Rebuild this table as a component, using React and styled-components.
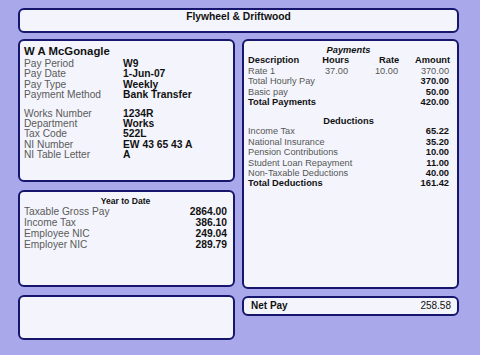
import React from 'react'
import styled, { createGlobalStyle } from 'styled-components'

const GlobalStyle = createGlobalStyle`
  html, body {
    margin: 0;
    padding: 0;
    background: #a8a8ea;
  }
  body {
    font-family: "Liberation Sans", Arial, sans-serif;
    color: #111111;
  }
  * {
    box-sizing: border-box;
  }
`

const Page = styled.div`
  width: 480px;
  height: 355px;
  padding: 8px 21px 0 18px;
  background: #a8a8ea;
  display: flex;
  flex-direction: column;
  gap: 6px;
`

const Panel = styled.div`
  background: #f4f5fc;
  border: 2px solid #16166c;
  border-radius: 6px;
  height: ${p => p.h}px;
  padding: ${p => p.pad || '0'};
`

const Header = styled(Panel)`
  text-align: center;
  font-weight: bold;
  font-size: 10.3px;
  line-height: 12px;
  padding-top: 1px;
`

const Columns = styled.div`
  display: grid;
  grid-template-columns: 217px 217px;
  column-gap: 7px;
`

const Stack = styled.div`
  display: flex;
  flex-direction: column;
  gap: ${p => p.gap}px;
`

const Name = styled.div`
  font-weight: bold;
  font-size: 11.4px;
  line-height: 13px;
`

const InfoGrid = styled.div`
  display: grid;
  grid-template-columns: 99px 1fr;
  font-size: 10.2px;
  line-height: 10.4px;
  margin-top: ${p => p.top}px;
`

const Label = styled.div`
  color: #5a5a5a;
`

const Value = styled.div`
  font-weight: bold;
  font-size: 10.3px;
  color: #111111;
  text-align: ${p => (p.right ? 'right' : 'left')};
`

const SectionTitle = styled.div`
  text-align: center;
  font-weight: bold;
  font-style: ${p => (p.italic ? 'italic' : 'normal')};
  font-size: ${p => p.size || 9.3}px;
  line-height: 10.4px;
  margin-top: ${p => p.top || 0}px;
`

const PayRow = styled.div`
  display: grid;
  grid-template-columns: 1fr 50px 50px 51px;
  font-size: 9.2px;
  line-height: 10.4px;
  color: #555555;
`

const Cell = styled.div`
  grid-column: ${p => p.span || 'auto'};
  text-align: ${p => (p.right ? 'right' : 'left')};
  font-weight: ${p => (p.bold ? 'bold' : 'normal')};
  font-size: ${p => (p.bold ? 9.3 : 9.2)}px;
  color: ${p => (p.bold ? '#111111' : '#555555')};
`

const YtdGrid = styled.div`
  display: grid;
  grid-template-columns: 1fr auto;
  font-size: 10.2px;
  line-height: 11px;
`

const NetPay = styled(Panel)`
  display: flex;
  justify-content: space-between;
  align-items: center;
  padding: 0 6px 0 7px;
  font-size: 10px;
  line-height: 12px;
`

const details = [
  ['Pay Period', 'W9'],
  ['Pay Date', '1-Jun-07'],
  ['Pay Type', 'Weekly'],
  ['Payment Method', 'Bank Transfer'],
]

const employee = [
  ['Works Number', '1234R'],
  ['Department', 'Works'],
  ['Tax Code', '522L'],
  ['NI Number', 'EW 43 65 43 A'],
  ['NI Table Letter', 'A'],
]

const deductions = [
  ['Income Tax', '65.22'],
  ['National Insurance', '35.20'],
  ['Pension Contributions', '10.00'],
  ['Student Loan Repayment', '11.00'],
  ['Non-Taxable Deductions', '40.00'],
]

const ytd = [
  ['Taxable Gross Pay', '2864.00'],
  ['Income Tax', '386.10'],
  ['Employee NIC', '249.04'],
  ['Employer NIC', '289.79'],
]

const Pairs = ({ rows, top }) => (
  <InfoGrid top={top}>
    {rows.map(([k, v]) => (
      <React.Fragment key={k}>
        <Label>{k}</Label>
        <Value>{v}</Value>
      </React.Fragment>
    ))}
  </InfoGrid>
)

const App = () => {
  return (
    <Page>
      <GlobalStyle />
      <Header h={25}>Flywheel &amp; Driftwood</Header>
      <Columns>
        <Stack gap={8}>
          <Panel h={143} pad="4px 4px 0 4px">
            <Name>W A McGonagle</Name>
            <Pairs rows={details} top={1} />
            <Pairs rows={employee} top={8} />
          </Panel>
          <Panel h={97} pad="4px 6px 0 4px">
            <SectionTitle size={8.6}>Year to Date</SectionTitle>
            <YtdGrid>
              {ytd.map(([k, v]) => (
                <React.Fragment key={k}>
                  <Label>{k}</Label>
                  <Value right>{v}</Value>
                </React.Fragment>
              ))}
            </YtdGrid>
          </Panel>
          <Panel h={45} />
        </Stack>
        <Stack gap={7}>
          <Panel h={250} pad="4px 8px 0 4px">
            <SectionTitle italic>Payments</SectionTitle>
            <PayRow>
              <Cell bold>Description</Cell>
              <Cell bold right>Hours</Cell>
              <Cell bold right>Rate</Cell>
              <Cell bold right>Amount</Cell>
            </PayRow>
            <PayRow>
              <Cell>Rate 1</Cell>
              <Cell right>37.00</Cell>
              <Cell right>10.00</Cell>
              <Cell right>370.00</Cell>
            </PayRow>
            <PayRow>
              <Cell span="1 / 4">Total Hourly Pay</Cell>
              <Cell bold right>370.00</Cell>
            </PayRow>
            <PayRow>
              <Cell span="1 / 4">Basic pay</Cell>
              <Cell bold right>50.00</Cell>
            </PayRow>
            <PayRow>
              <Cell bold span="1 / 4">Total Payments</Cell>
              <Cell bold right>420.00</Cell>
            </PayRow>
            <SectionTitle top={8.6}>Deductions</SectionTitle>
            {deductions.map(([k, v]) => (
              <PayRow key={k}>
                <Cell span="1 / 4">{k}</Cell>
                <Cell bold right>{v}</Cell>
              </PayRow>
            ))}
            <PayRow>
              <Cell bold span="1 / 4">Total Deductions</Cell>
              <Cell bold right>161.42</Cell>
            </PayRow>
          </Panel>
          <NetPay h={20}>
            <strong>Net Pay</strong>
            <span>258.58</span>
          </NetPay>
        </Stack>
      </Columns>
    </Page>
  )
}

export default App
